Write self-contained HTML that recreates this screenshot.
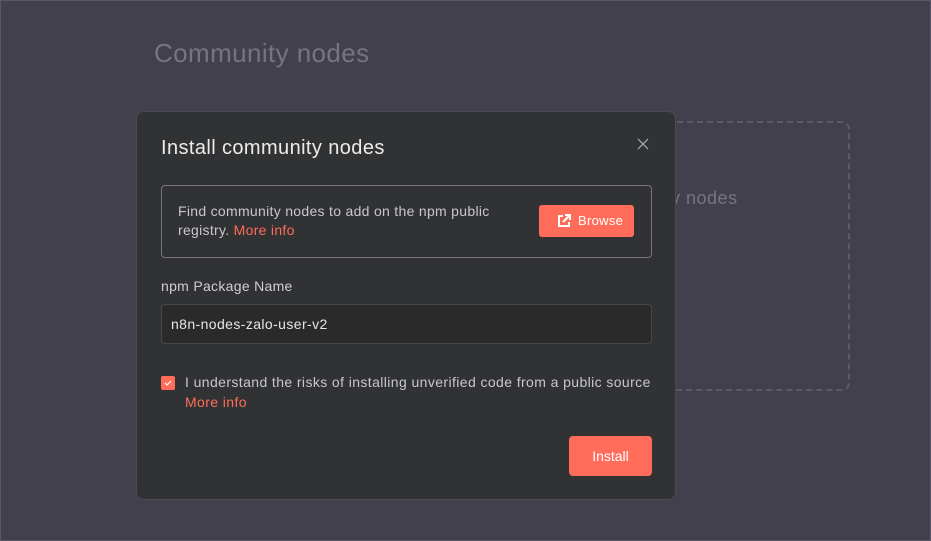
<!DOCTYPE html>
<html><head><meta charset="utf-8"><style>
*{box-sizing:border-box;margin:0;padding:0}
html,body{width:931px;height:541px;overflow:hidden}
body{background:#43404d;font-family:"Liberation Sans",sans-serif;position:relative;box-shadow:inset 0 0 0 1px #5a5866}
.title{position:absolute;left:154px;top:38px;font-size:26px;color:#77747f;letter-spacing:0.4px}
.dash{position:absolute;left:599px;top:121px;width:251px;height:270px;border:2px dashed #5d5a66;border-radius:8px}
.dash span{position:absolute;left:70px;top:65px;font-size:18px;color:#77747f;letter-spacing:0.5px}
.modal{position:absolute;left:136px;top:111px;width:540px;height:389px;background:#313233;border:1px solid #4a4a4f;border-radius:8px}
.h{position:absolute;left:24px;top:25px;font-size:20px;color:#ececec;letter-spacing:0.4px}
.x{position:absolute;left:500px;top:26px;width:12px;height:12px}
.info{position:absolute;left:24px;top:73px;width:491px;height:73px;border:1px solid #77777d;border-radius:4px}
.info p{position:absolute;left:16px;top:16px;font-size:14px;line-height:19px;color:#c8c8cc;width:360px;letter-spacing:0.3px}
a{color:#ff6d5a;text-decoration:none}
.br{position:absolute;left:377px;top:19px;width:95px;height:32px;background:#ff6d5a;border-radius:3px;color:#fff;font-size:13px;line-height:32px;padding-left:39px;letter-spacing:0.3px}
.br svg{position:absolute;left:18px;top:9px}
.lbl{position:absolute;left:24px;top:166px;font-size:14px;color:#cfcfd3;letter-spacing:0.3px}
.inp{position:absolute;left:24px;top:192px;width:491px;height:40px;background:#2a2a2b;border:1px solid #48484c;border-radius:4px;color:#e6e6e8;font-size:14px;line-height:38px;padding-left:9px;letter-spacing:0.4px}
.cb{position:absolute;left:24px;top:264px;width:14px;height:14px;background:#ff6d5a;border-radius:2px}
.t{position:absolute;left:48px;top:260px;width:467px;height:42px;overflow:hidden;white-space:nowrap;font-size:14px;line-height:20px;color:#c8c8cc;letter-spacing:0.4px}
.ins{position:absolute;left:432px;top:324px;width:83px;height:40px;background:#ff6d5a;border-radius:4px;color:#fff;font-size:14px;line-height:40px;text-align:center}
</style></head><body>
<div class="title">Community nodes</div>
<div class="dash"><span>y nodes</span></div>
<div class="modal">
<div class="h">Install community nodes</div>
<svg class="x" viewBox="0 0 12 12"><path d="M1 1L11 11M11 1L1 11" stroke="#a0a0a5" stroke-width="1.3"/></svg>
<div class="info"><p>Find community nodes to add on the npm public registry. <a>More info</a></p>
<div class="br"><svg width="14" height="14" viewBox="0 0 14 14" fill="none" stroke="#fff" stroke-width="2"><path d="M6 2H2v10h10V8"/><path d="M8 1h5v5M13 1L6 8"/></svg>Browse</div></div>
<div class="lbl">npm Package Name</div>
<div class="inp">n8n-nodes-zalo-user-v2</div>
<div class="cb"><svg width="14" height="14" viewBox="0 0 14 14"><path d="M4 7l2 2 4-4" stroke="#fff" stroke-width="1.2" fill="none"/></svg></div>
<div class="t">I understand the risks of installing unverified code from a public source.<br><a>More info</a></div>
<div class="ins">Install</div>
</div>
</body></html>
